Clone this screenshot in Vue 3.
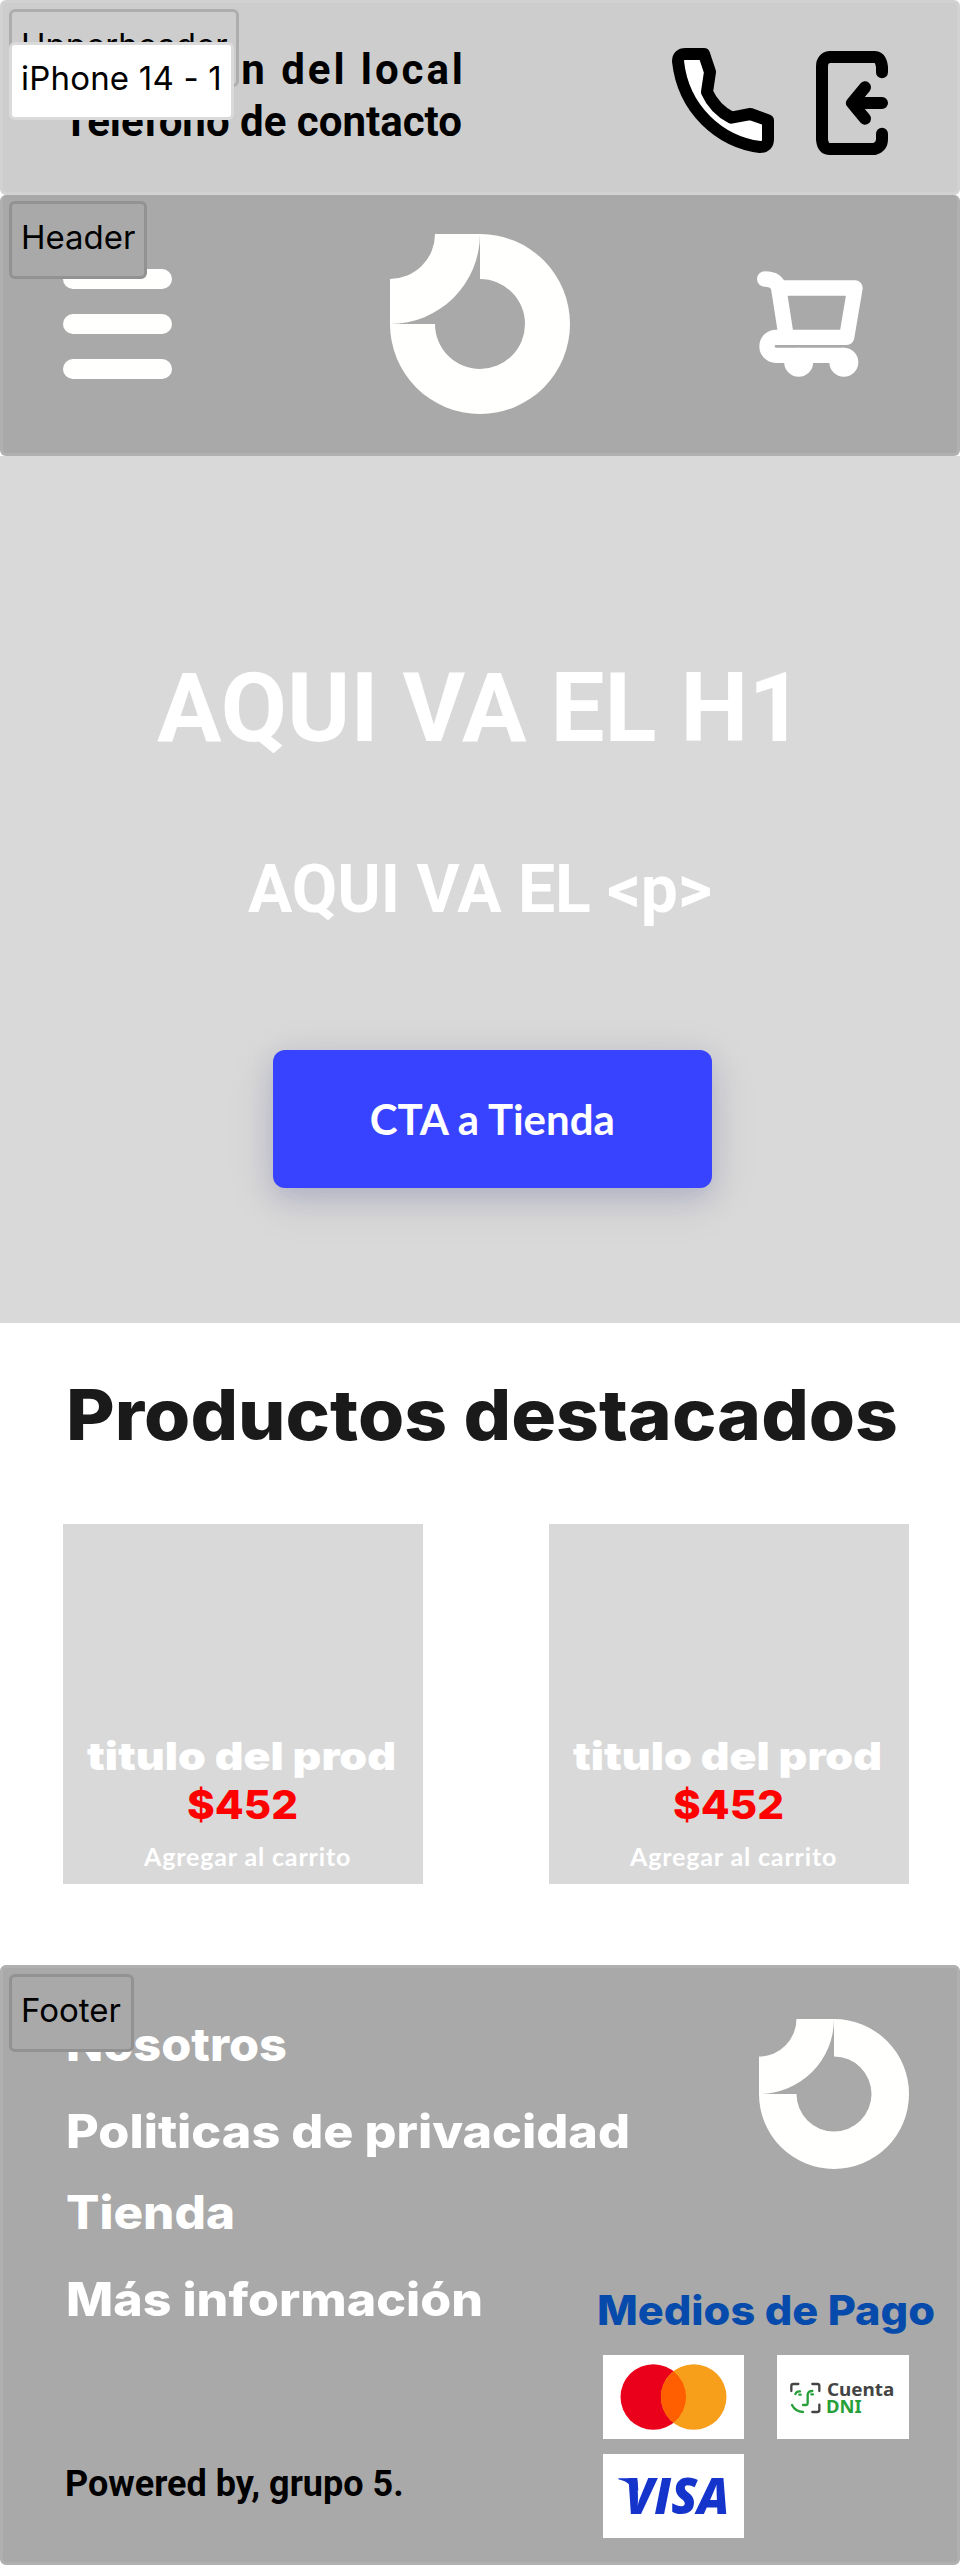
<script setup>
const products = [
  { title: 'titulo del prod', price: '$452', action: 'Agregar al carrito' },
  { title: 'titulo del prod', price: '$452', action: 'Agregar al carrito' },
]

// Each link is stretched to its display width; `height` is the row height.
const links = [
  { text: 'Nosotros', width: 221, height: 87 },
  { text: 'Politicas de privacidad', width: 564, height: 81 },
  { text: 'Tienda', width: 169, height: 87 },
  { text: 'Más información', width: 417, height: 87 },
]
</script>

<template>
  <main class="page">
    <section class="upper frame">
      <span class="tag tag-upper">Upperheader</span>
      <span class="tag tag-device">iPhone 14 - 1</span>
      <div class="contact">
        <div class="address">Dirección del local</div>
        <div class="phone">Teléfono de contacto</div>
      </div>
      <svg class="upper-icons" width="216" height="110" viewBox="96 81 648 330" fill="none" stroke="#000" stroke-width="36" stroke-linecap="round" stroke-linejoin="round">
        <path fill="#fff" d="M192 102L210 156L201 216Q223 266 274 293L331 282L384 301V357Q384 381 360 381C240 365 130 270 114 124Q114 102 137 102Z" />
        <path d="M726 157V141Q722 111 703 111H570Q546 114 546 139V359Q549 387 570 387H703Q726 380 726 357V341M726 249H636M675 202L636 249L675 296" />
      </svg>
    </section>

    <header class="header frame">
      <span class="tag tag-header">Header</span>
      <div class="burger"><i></i><i></i><i></i></div>
      <svg class="logo" width="180" height="180" viewBox="0 0 180 180" fill="#fffffe">
        <path d="M45 0H90A90 90 0 0 1 0 90V45A45 45 0 0 0 45 0Z" />
        <path d="M90 0A90 90 0 1 1 0 90H45A45 45 0 1 0 90 45Z" />
      </svg>
      <svg class="cart" width="108" height="108" viewBox="108 90 324 324" fill="none" stroke="#fff" stroke-width="46" stroke-linecap="round" stroke-linejoin="round">
        <path d="M134 117Q170 117 176 144L199 292M182 144H405L380 292H168A27 27 0 0 0 168 346H371" />
        <circle cx="236" cy="367" r="43.5" fill="#fff" stroke="none" />
        <circle cx="371.5" cy="367" r="43.5" fill="#fff" stroke="none" />
      </svg>
    </header>

    <section class="hero">
      <h1>AQUI VA EL H1</h1>
      <p>AQUI VA EL &lt;p&gt;</p>
      <button class="cta">CTA a Tienda</button>
    </section>

    <section class="featured">
      <svg class="featured-title" width="840" height="90">
        <text x="66" y="67" textLength="832" lengthAdjust="spacingAndGlyphs">Productos destacados</text>
      </svg>
      <div class="products">
        <article v-for="(p, i) in products" :key="i" class="card">
          <svg width="360" height="42">
            <text class="card-title" x="24" y="33" textLength="309" lengthAdjust="spacingAndGlyphs">{{ p.title }}</text>
          </svg>
          <svg width="360" height="48">
            <text class="card-price" x="124" y="40" textLength="111" lengthAdjust="spacingAndGlyphs">{{ p.price }}</text>
          </svg>
          <div class="card-action">{{ p.action }}</div>
        </article>
      </div>
    </section>

    <footer class="footer frame">
      <span class="tag tag-footer">Footer</span>
      <div class="footer-left">
        <nav>
          <svg v-for="l in links" :key="l.text" width="580" :height="l.height">
            <text x="1" y="48" :textLength="l.width" lengthAdjust="spacingAndGlyphs">{{ l.text }}</text>
          </svg>
        </nav>
        <div class="powered">Powered by, grupo 5.</div>
      </div>
      <div class="footer-right">
        <svg class="footer-logo" width="150" height="150" viewBox="0 0 180 180" fill="#fffffe">
          <path d="M45 0H90A90 90 0 0 1 0 90V45A45 45 0 0 0 45 0Z" />
          <path d="M90 0A90 90 0 1 1 0 90H45A45 45 0 1 0 90 45Z" />
        </svg>
        <svg class="pay-title" width="345" height="60">
          <text x="1" y="40" textLength="338" lengthAdjust="spacingAndGlyphs">Medios de Pago</text>
        </svg>
        <div class="methods">
          <svg width="141" height="84" viewBox="0 0 423 252">
            <rect width="423" height="252" fill="#fff" />
            <circle cx="151" cy="126" r="98.5" fill="#eb001b" />
            <circle cx="272" cy="126" r="98.5" fill="#f79e1b" />
            <path fill="#ff5f00" d="M211.5 48.5A98.5 98.5 0 0 1 211.5 203.5A98.5 98.5 0 0 1 211.5 48.5Z" />
          </svg>
          <svg width="132" height="84" viewBox="0 0 396 252">
            <rect width="396" height="252" fill="#fff" />
            <g fill="none" stroke-width="7" stroke-linecap="round" stroke-linejoin="round">
              <path stroke="#444" d="M43 108V93Q43 87 49 87H64M106 87H121Q127 87 127 93V108M127 149V165Q127 171 121 171H106" />
              <path stroke="#28a03a" d="M45 150Q55 170 78 171M78 150H86Q92 150 92 143V118Q94 108 106 108M55 117Q59 108 69 109M67 119H71M103 118H108" />
            </g>
            <text class="dni" x="150" y="123" textLength="202" lengthAdjust="spacingAndGlyphs" fill="#444">Cuenta</text>
            <text class="dni" x="147" y="174" textLength="107" lengthAdjust="spacingAndGlyphs" fill="#28a03a">DNI</text>
          </svg>
          <svg width="141" height="84" viewBox="0 0 423 252">
            <rect width="423" height="252" fill="#fff" />
            <text class="visa" x="66" y="179" textLength="313" lengthAdjust="spacingAndGlyphs">VISA</text>
            <path fill="#1434cb" d="M46 73H94Q103 74 104 86L106 110L78 91Q68 81 46 76Z" />
          </svg>
        </div>
      </div>
    </footer>
  </main>
</template>

<style>
body {
  background: #fff;
}
</style>

<style scoped>
.page {
  width: 960px;
  height: 2565px;
  overflow: hidden;
  font-family: Roboto, sans-serif;
}
.page svg {
  display: block;
  overflow: visible;
}
.frame {
  position: relative;
  box-sizing: border-box;
  border: 3px solid #b0b0b0;
  border-radius: 6px;
  background: #a9a9a9;
}
.tag {
  position: absolute;
  left: 6px;
  top: 6px;
  z-index: 1;
  box-sizing: border-box;
  height: 78px;
  padding-left: 9px;
  border: 3px solid #929292;
  border-radius: 6px;
  background: #a9a9a9;
  color: #000;
  font: 400 33px/66px Inter, sans-serif;
  white-space: nowrap;
}
.tag-upper {
  width: 230px;
  border-color: #adadad;
  background: #cdcdcd;
}
.tag-device {
  top: 39px;
  width: 225px;
  border-color: #dadada;
  background: #fff;
  letter-spacing: .2px;
}
.tag-header {
  top: 3px;
  width: 138px;
}
.tag-footer {
  width: 125px;
}
.upper {
  display: flex;
  justify-content: space-between;
  height: 195px;
  padding: 41px 69px 0 60px;
  border-color: #d2d2d2;
  background: #cdcdcd;
}
.contact {
  font-size: 42px;
  font-weight: 700;
  line-height: 52px;
  white-space: nowrap;
}
.address {
  letter-spacing: 2.95px;
}
.upper-icons {
  margin-top: 3px;
}
.header {
  display: flex;
  height: 261px;
  border-top-color: #a8a8a8;
}
.burger {
  display: flex;
  flex-direction: column;
  gap: 25.5px;
  width: 109px;
  margin: 71px 0 0 59.5px;
}
.burger i {
  height: 19.5px;
  border-radius: 10px;
  background: #fffffe;
}
.logo {
  margin: 36px 0 0 218.5px;
}
.cart {
  margin: 72px 0 0 186px;
}
.hero {
  display: flex;
  flex-direction: column;
  align-items: flex-start;
  box-sizing: border-box;
  height: 867px;
  padding-top: 196px;
  background: #d9d9d9;
  color: #fff;
  font-weight: 700;
  white-space: nowrap;
}
.hero h1 {
  margin: 0 0 87px 157px;
  font-size: 96px;
  line-height: 112px;
  letter-spacing: .1px;
}
.hero p {
  margin: 0 0 121px 248px;
  font-size: 66px;
  line-height: 78px;
}
.cta {
  width: 438.5px;
  height: 138px;
  margin: 0 0 0 273px;
  padding: 0;
  border: 0;
  border-radius: 12px;
  background: #3843ff;
  box-shadow: 0 12px 48px rgba(55, 55, 90, .13), 0 9px 24px rgba(55, 55, 160, .16);
  color: #fff;
  font: 700 42px/138px Lato, sans-serif;
}
.featured {
  height: 642px;
  box-sizing: border-box;
  padding-top: 50px;
}
.featured-title {
  width: 960px;
  height: 90px;
  font: 800 70px Inter, sans-serif;
  fill: #1a1a1a;
}
.products {
  display: flex;
  gap: 126px;
  margin: 61px 0 0 63px;
}
.card {
  display: flex;
  flex-direction: column;
  box-sizing: border-box;
  width: 360px;
  height: 360px;
  padding-top: 213px;
  background: #d9d9d9;
}
.card-title {
  font: 900 39px Inter, sans-serif;
  fill: #fff;
}
.card-price {
  font: 800 40px Inter, sans-serif;
  fill: red;
}
.card-action {
  margin-top: 12px;
  padding-left: 81px;
  color: #fff;
  font: 700 25px/34px Lato, sans-serif;
  letter-spacing: .85px;
  white-space: nowrap;
}
.footer {
  display: flex;
  height: 600px;
}
.footer-left {
  width: 596px;
  padding: 45px 0 0 62px;
  box-sizing: border-box;
}
.footer-left nav {
  font: 800 46px Inter, sans-serif;
  fill: #fff;
}
.powered {
  margin-top: 108px;
  font-weight: 700;
  font-size: 36px;
  line-height: 42px;
  white-space: nowrap;
}
.footer-right {
  padding-top: 51px;
}
.footer-logo {
  margin-left: 160px;
}
.pay-title {
  margin: 116px 0 0 -3px;
  font: 800 40.5px Inter, sans-serif;
  fill: #064bab;
}
.methods {
  display: grid;
  grid-template-columns: 141px 132px;
  gap: 15px 33px;
  margin: 10px 0 0 4px;
}
.dni {
  font: 700 54px "Noto Sans", sans-serif;
}
.visa {
  font: italic 800 146px "Open Sans", sans-serif;
  fill: #1434cb;
}
</style>
